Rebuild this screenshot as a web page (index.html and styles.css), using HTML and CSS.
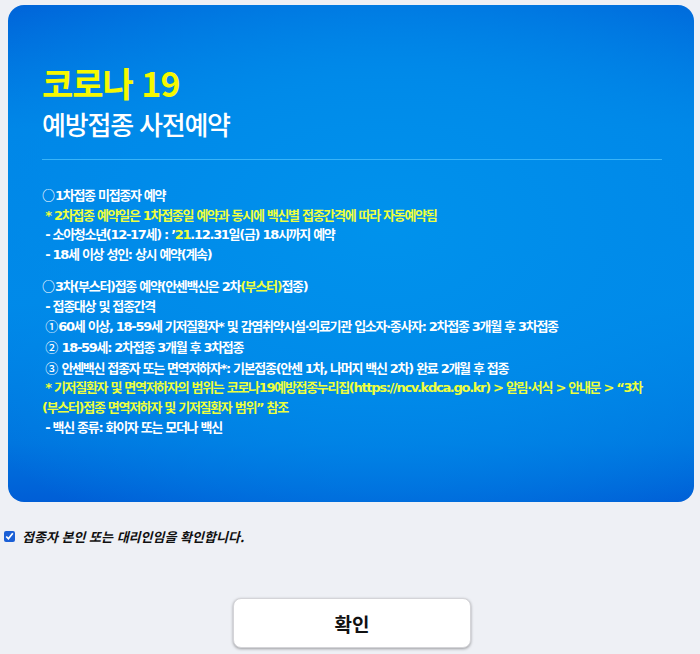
FILE: index.html
```html
<!DOCTYPE html>
<html lang="ko">
<head>
<meta charset="utf-8">
<title>코로나 19 예방접종 사전예약</title>
<link rel="stylesheet" href="styles.css">
</head>
<body>
<div class="card">
  <h1 class="title">코로나 19</h1>
  <h2 class="subtitle">예방접종 사전예약</h2>
  <hr class="divider">
  <div class="notice">
    <div class="block">
      <p><span class="mark">○</span>1차접종 미접종자 예약</p>
      <p class="hl">&nbsp;* 2차접종 예약일은 1차접종일 예약과 동시에 백신별 접종간격에 따라 자동예약됨</p>
      <p>&nbsp;- 소아청소년(12-17세) : ’<span class="hl">21</span>.12.31일(금) 18시까지 예약</p>
      <p>&nbsp;- 18세 이상 성인: 상시 예약(계속)</p>
    </div>
    <div class="block">
      <p><span class="mark">○</span>3차(부스터)접종 예약(안센백신은 2차<span class="hl">(부스터)</span>접종)</p>
      <p>&nbsp;- 접종대상 및 접종간격</p>
      <p>&nbsp;<span class="mark">①</span>60세 이상, 18-59세 기저질환자* 및 감염취약시설·의료기관 입소자·종사자: 2차접종 3개월 후 3차접종</p>
      <p>&nbsp;<span class="mark">②</span> 18-59세: 2차접종 3개월 후 3차접종</p>
      <p>&nbsp;<span class="mark">③</span> 안센백신 접종자 또는 면역저하자*: 기본접종(안센 1차, 나머지 백신 2차) 완료 2개월 후 접종</p>
      <p class="hl">&nbsp;* 기저질환자 및 면역저하자의 범위는 코로나19예방접종누리집(https://ncv.kdca.go.kr) &gt; 알림·서식 &gt; 안내문 &gt; “3차 (부스터)접종 면역저하자 및 기저질환자 범위” 참조</p>
      <p>&nbsp;- 백신 종류: 화이자 또는 모더나 백신</p>
    </div>
  </div>
</div>
<label class="agree">
  <input type="checkbox" class="agree-box" checked>
  <span class="agree-text">접종자 본인 또는 대리인임을 확인합니다.</span>
</label>
<div class="actions">
  <button class="confirm" type="button">확인</button>
</div>
</body>
</html>
```
FILE: styles.css
```css
html, body {
  margin: 0;
  padding: 0;
}
body {
  background: #eef0f5;
  font-family: "Noto Sans CJK KR", "Noto Sans", sans-serif;
  width: 700px;
  height: 654px;
  overflow: hidden;
}
.card {
  margin: 5px 6px 0 8px;
  height: 497px;
  box-sizing: border-box;
  border-radius: 16px;
  padding: 57px 32px 0 34px;
  background:
    radial-gradient(ellipse 75% 70% at 55% 45%, rgba(0,146,236,1) 0%, rgba(0,140,234,0.9) 45%, rgba(0,120,226,0) 100%),
    linear-gradient(180deg, #0062d8 0%, #0084e6 25%, #0088e8 60%, #0074de 88%, #005ed6 100%);
  color: #ffffff;
}
.title {
  margin: 0;
  font-size: 34px;
  line-height: 41px;
  font-weight: 700;
  letter-spacing: -1px;
  color: #f6f800;
}
.subtitle {
  margin: 5px 0 0;
  font-size: 26px;
  line-height: 32px;
  font-weight: 500;
  letter-spacing: -1.2px;
  color: #ffffff;
}
.divider {
  margin: 19px 0 0;
  border: 0;
  height: 1px;
  background: #39b4f8;
}
.notice {
  margin-top: 25px;
  font-family: "DejaVu Sans", "Noto Sans CJK KR", sans-serif;
  font-size: 13px;
  line-height: 19.7px;
  letter-spacing: -1.3px;
  font-weight: 700;
  word-break: keep-all;
}
.mark {
  font-family: "Noto Sans CJK KR", sans-serif;
  font-weight: 500;
  letter-spacing: 0;
}
.block + .block {
  margin-top: 11px;
}
.notice p {
  margin: 0;
}
.hl {
  color: #eeff3c;
}
.agree {
  display: flex;
  align-items: center;
  margin: 25px 0 0 0;
  height: 18px;
}
.agree-box {
  margin: 0 4px 0 4px;
  width: 11px;
  height: 11px;
  accent-color: #1a5fd6;
}
.agree-text {
  font-size: 13px;
  font-style: italic;
  font-weight: 700;
  letter-spacing: 0;
  color: #111111;
  margin-left: 3px;
}
.actions {
  display: flex;
  justify-content: center;
  padding-left: 4px;
  margin-top: 53px;
}
.confirm {
  width: 238px;
  height: 50px;
  background: #ffffff;
  border: 1px solid #d4d4d8;
  border-radius: 8px;
  box-shadow: 0 1px 3px rgba(0,0,0,0.35);
  font-family: "Noto Sans CJK KR", "Noto Sans", sans-serif;
  font-size: 19px;
  font-weight: 700;
  color: #111111;
}
```
